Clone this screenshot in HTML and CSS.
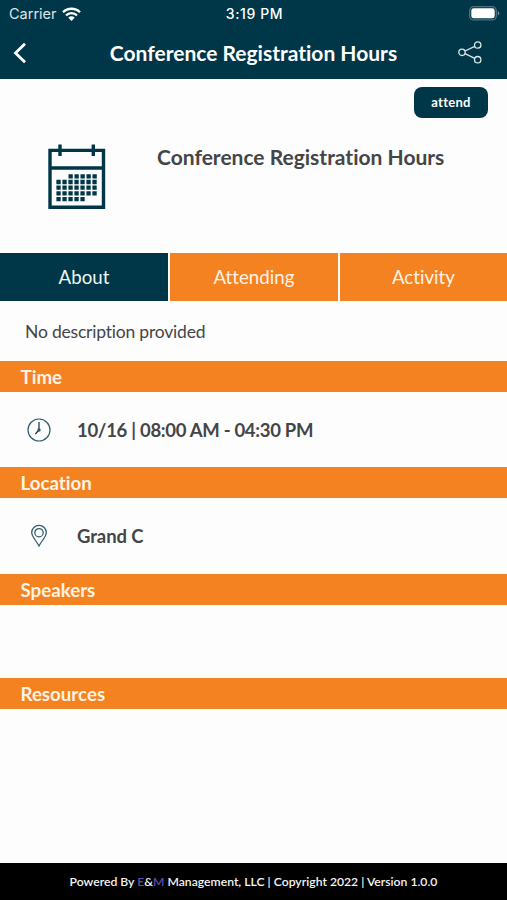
FILE: index.html
```html
<!DOCTYPE html>
<html lang="en">
<head>
<meta charset="utf-8">
<title>Conference Registration Hours</title>
<link rel="stylesheet" href="styles.css">
</head>
<body>
<header class="top">
  <div class="status">
    <div class="carrier"><span class="carrier-name">Carrier</span>
      <svg width="19" height="14" viewBox="0 0 19 14" fill="none" stroke="#fff" stroke-width="2.3"><path d="M1 5.2a12.2 12.2 0 0 1 17 0M4 8.4a7.8 7.8 0 0 1 11 0"/><path d="M6.3 10.7a4.5 4.5 0 0 1 6.4 0L9.5 14z" fill="#fff" stroke="none"/></svg>
    </div>
    <span class="clock">3:19 PM</span>
    <svg class="battery" width="31" height="15" viewBox="0 0 31 15"><rect x=".7" y=".7" width="26.6" height="13.2" rx="4" fill="none" stroke="#4d7380" stroke-width="1.3"/><rect x="2.3" y="2.3" width="23.4" height="10" rx="2.4" fill="#fff"/><path d="M28.8 5v4.6q1.5-.7 1.5-2.3T28.8 5" fill="#708f9b"/></svg>
  </div>
  <div class="nav">
    <svg class="back" width="14" height="22" viewBox="0 0 14 22" fill="none" stroke="#fff" stroke-width="2.8"><path d="M12 1.8L2.5 11l9.5 9.2"/></svg>
    <h1 class="nav-title">Conference Registration Hours</h1>
    <svg class="share" width="24" height="23" viewBox="0 0 24 23" fill="none" stroke="#dce5e9" stroke-width="1.3"><circle cx="4" cy="11.3" r="3.2"/><circle cx="19.7" cy="4" r="3.2"/><circle cx="19.7" cy="18.7" r="3.2"/><path d="M7 10l9.8-4.6M7 12.7l9.8 4.6"/></svg>
  </div>
</header>
<section class="hero">
  <button class="attend">attend</button>
  <div class="summary">
    <svg class="calendar" width="58" height="66" viewBox="0 0 58 66" fill="none" stroke="#003748" stroke-width="3.4"><path d="M2 6.4h53.5v56.9H2zM2 24h53.5M12 .5v11.5M45.3 .5v11.5"/><path stroke-width="4.3" stroke-dasharray="4.3 1.7" d="M20.5 32.3h28.4M8.4 38h40.5M8.4 43.7h40.5M8.4 49.4h40.5M8.4 55.1h28.4"/></svg>
    <h2 class="event">Conference Registration Hours</h2>
  </div>
</section>
<nav class="tabs">
  <span class="tab tab-on">About</span><span class="tab">Attending</span><span class="tab">Activity</span>
</nav>
<main>
  <p class="description">No description provided</p>
  <h3 class="bar">Time</h3>
  <div class="row">
    <svg class="row-icon" width="24" height="24" viewBox="0 0 24 24" fill="none" stroke="#315d6c" stroke-width="1.2"><circle cx="12" cy="12" r="11"/><path d="M12 4v8l-3.7 4" stroke="#003748"/><circle cx="12" cy="12" r="1.1" fill="#003748"/></svg>
    <span class="time">10/16 | 08:00 AM - 04:30 PM</span>
  </div>
  <h3 class="bar">Location</h3>
  <div class="row">
    <svg class="row-icon" width="24" height="24" viewBox="0 0 24 24" fill="none" stroke="#315d6c" stroke-width="1.25"><path d="M12 22C10.5 18.5 4.7 12.5 4.7 8.7a7.3 7.3 0 0 1 14.6 0C19.3 12.5 13.5 18.5 12 22z"/><circle cx="12" cy="8.7" r="4.2"/></svg>
    <span class="place">Grand C</span>
  </div>
  <h3 class="bar">Speakers</h3>
  <div class="empty"></div>
  <h3 class="bar">Resources</h3>
</main>
<footer class="footer"><span>Powered By <span class="brand">E</span>&amp;<span class="brand">M</span> Management, LLC | Copyright 2022 | Version 1.0.0</span></footer>
</body>
</html>
```
FILE: styles.css
```css
* { box-sizing: border-box; }
body {
  margin: 0;
  height: 900px;
  display: flex;
  flex-direction: column;
  background: #fdfdfd;
  color: #444547;
  font-family: Lato, sans-serif;
  font-variant-ligatures: none;
}
h1, h2, h3, p { margin: 0; }
svg { display: block; flex: none; }
.top { height: 79px; background: #003748; color: #fff; }
.status {
  height: 27px;
  padding: 0 7px 0 9px;
  display: grid;
  grid-template-columns: 1fr auto 1fr;
  align-items: center;
  font: 15px/27px Inter, sans-serif;
}
.carrier { display: flex; align-items: center; gap: 5px; color: #dce5e9; }
.carrier-name { font-size: 14.5px; }
.clock { font-size: 14px; font-weight: 500; letter-spacing: .6px; }
.battery { justify-self: end; }
.nav {
  height: 52px;
  padding: 0 24px 0 13px;
  display: grid;
  grid-template-columns: 36px 1fr 25px;
  align-items: center;
}
.nav-title {
  text-align: center;
  font-size: 21px;
  line-height: 52px;
  font-weight: 700;
  white-space: nowrap;
}
.share { justify-self: end; position: relative; top: -1px; left: -1px; }
.hero { height: 173.5px; padding-top: 8px; }
.attend {
  display: block;
  width: 74px;
  height: 31px;
  margin: 0 19px 0 auto;
  padding: 0;
  border: 0;
  border-radius: 8px;
  background: #003748;
  color: #fff;
  font: 700 13px/31px Lato, sans-serif;
  font-variant-ligatures: none;
  letter-spacing: .3px;
}
.summary { display: flex; padding: 26px 0 0 48px; gap: 51px; }
.event {
  font-size: 21px;
  line-height: 25px;
  font-weight: 700;
  white-space: nowrap;
}
.tabs {
  display: grid;
  grid-template: 48.5px / 168px 167.5px 1fr;
  gap: 2.2px;
  height: 48.5px;
}
.tab { background: #f58220; color: #fff3e5; font-size: 18.7px; line-height: 49px; text-align: center; }
.tab-on { background: #003748; color: #f1f5f6; }
main { flex: 1; }
.description { height: 60px; padding-left: 25px; font-size: 17.5px; line-height: 61px; letter-spacing: -.2px; }
.bar {
  height: 31px;
  padding-left: 20.5px;
  background: #f58220;
  color: #fff3e5;
  font-size: 18.7px;
  line-height: 32px;
  font-weight: 700;
}
.row {
  height: 75.3px;
  display: flex;
  align-items: center;
  padding-left: 27px;
  gap: 26px;
  font-size: 18.5px;
  font-weight: 700;
}
.row-icon { position: relative; left: -.5px; }
.time { letter-spacing: -.3px; }
.place { letter-spacing: -.1px; }
.empty { height: 73px; }
.footer {
  height: 37px;
  background: #000;
  color: #f4f4f4;
  text-align: center;
  font-size: 12.2px;
  line-height: 37px;
  font-weight: 600;
  white-space: nowrap;
}
.brand { color: #5b4bae; }
```
